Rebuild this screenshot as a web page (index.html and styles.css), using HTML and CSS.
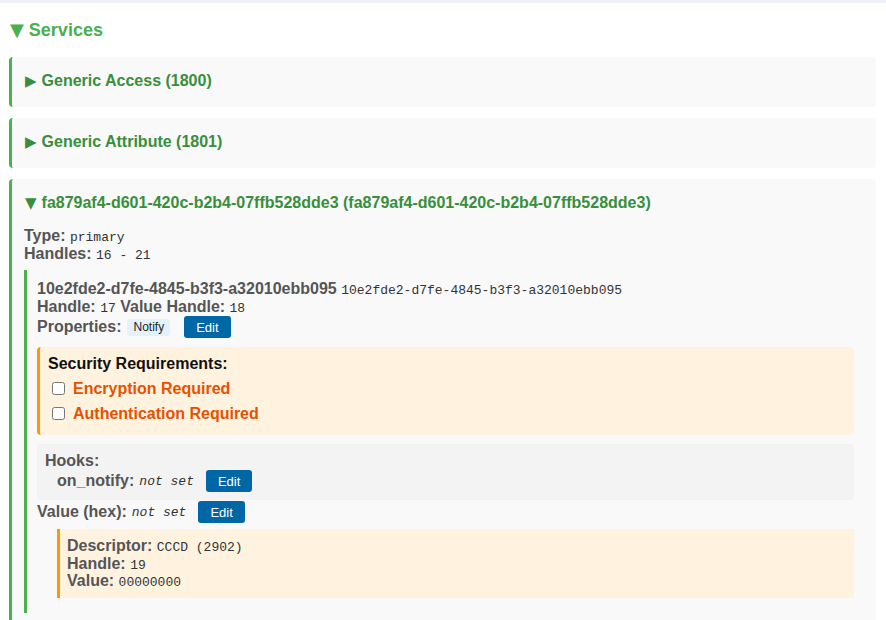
FILE: index.html
```html
<!DOCTYPE html>
<html lang="en">
<head>
  <meta charset="UTF-8" />
  <meta name="viewport" content="width=device-width, initial-scale=1" />
  <title>GATT Services</title>
  <link rel="stylesheet" href="styles.css">
</head>
<body>
  <div class="top-strip"></div>

  <div class="services">
    <h2 class="section-title"><span class="caret">▼</span> Services</h2>

    <div class="service">
      <div class="service-title"><span class="arrow">▶</span>Generic Access (1800)</div>
    </div>

    <div class="service">
      <div class="service-title"><span class="arrow">▶</span>Generic Attribute (1801)</div>
    </div>

    <div class="service open">
      <div class="service-title"><span class="arrow">▼</span>fa879af4-d601-420c-b2b4-07ffb528dde3 (fa879af4-d601-420c-b2b4-07ffb528dde3)</div>

      <div class="line"><b class="label">Type:</b> <code>primary</code></div>
      <div class="line"><b class="label">Handles:</b> <code>16 - 21</code></div>

      <div class="characteristic">
        <div class="line"><b class="label">10e2fde2-d7fe-4845-b3f3-a32010ebb095</b> <code>10e2fde2-d7fe-4845-b3f3-a32010ebb095</code></div>
        <div class="line"><b class="label">Handle:</b> <code>17</code> <b class="label">Value Handle:</b> <code>18</code></div>
        <div class="row">
          <b class="label">Properties:</b>
          <span class="badge">Notify</span>
          <button class="btn">Edit</button>
        </div>

        <div class="security">
          <div class="security-title">Security Requirements:</div>
          <label class="check"><input type="checkbox"> Encryption Required</label>
          <label class="check"><input type="checkbox"> Authentication Required</label>
        </div>

        <div class="hooks">
          <div class="line"><b class="label">Hooks:</b></div>
          <div class="row hook">
            <b class="label">on_notify:</b>
            <code class="unset">not set</code>
            <button class="btn">Edit</button>
          </div>
        </div>

        <div class="row value-row">
          <b class="label">Value (hex):</b>
          <code class="unset">not set</code>
          <button class="btn">Edit</button>
        </div>

        <div class="descriptor">
          <div class="line"><b class="label">Descriptor:</b> <code>CCCD (2902)</code></div>
          <div class="line"><b class="label">Handle:</b> <code>19</code></div>
          <div class="line"><b class="label">Value:</b> <code>00000000</code></div>
        </div>
      </div>

      <div class="spacer"></div>
    </div>
  </div>
</body>
</html>
```

FILE: styles.css
```css
body {
  margin: 0;
  font-family: "Liberation Sans", Arial, sans-serif;
  font-size: 16px;
  color: #333;
  background: #fff;
}

.top-strip {
  height: 3px;
  background: #eef2f6;
}

.services {
  padding: 0 10px 0 9px;
}

.section-title {
  margin: 16px 0 16px 1px;
  font-size: 18px;
  line-height: 22px;
  color: #4caf50;
}

.caret {
  font-family: "DejaVu Sans", sans-serif;
}

.service {
  background: #f9f9f9;
  border-left: 3px solid #4caf50;
  border-radius: 4px;
  padding: 14px 12px 16px 12px;
  margin-bottom: 11px;
}

.service-title {
  font-weight: bold;
  line-height: 20px;
  color: #388e3c;
}

.arrow {
  font-family: "DejaVu Sans", sans-serif;
  font-size: 15px;
  line-height: 14px;
  margin-left: 1px;
  margin-right: 5px;
}

.open .service-title {
  margin-bottom: 14px;
}

.line {
  line-height: 17.5px;
}

.characteristic > .line {
  line-height: 18px;
}

.label {
  color: #555;
}

code {
  font-family: "Liberation Mono", "Courier New", monospace;
  font-size: 13px;
  line-height: 13px;
  color: #333;
}

.unset {
  font-style: italic;
  margin-left: 5px;
}

.characteristic {
  margin-top: 8px;
  border-left: 3px solid #4caf50;
  padding: 10px 10px 15px 10px;
}

.row {
  display: flex;
  align-items: center;
  height: 22px;
}

.characteristic > .row:first-of-type {
  margin-top: 1px;
}

.badge {
  margin-left: 6px;
  padding: 0 6px;
  height: 17px;
  line-height: 17px;
  font-size: 12px;
  color: #222;
  background: #e3f2fd;
  border-radius: 3px;
}

.btn {
  margin-left: 14px;
  height: 22px;
  padding: 0 12px;
  border: none;
  border-radius: 3px;
  background: #0067a6;
  color: #fff;
  font-family: "Liberation Sans", Arial, sans-serif;
  font-size: 13px;
  cursor: pointer;
}

.btn:hover {
  background: #005486;
}

.security {
  margin-top: 9px;
  padding: 8px 8px 9px 8px;
  background: #fff3e0;
  border-left: 3px solid #ff9800;
  border-radius: 4px;
}

.security-title {
  font-weight: bold;
  line-height: 18px;
  color: #111;
  margin-bottom: 3px;
}

.check {
  display: flex;
  align-items: center;
  height: 25px;
  font-weight: bold;
  color: #e65100;
}

.check input {
  margin: 0 8px 0 4px;
  width: 13px;
  height: 13px;
}

.hooks {
  margin-top: 9px;
  padding: 8px 8px 8px 8px;
  background: #f3f3f3;
  border-radius: 4px;
}

.hooks .line {
  line-height: 18px;
}

.hook {
  padding-left: 12px;
}

.hook .btn,
.value-row .btn {
  margin-left: 12px;
}

.value-row {
  margin-top: 1px;
}

.descriptor {
  margin: 6px 0 0 20px;
  padding: 8px 7px;
  background: #fff3e0;
  border-left: 3px solid #ff9800;
}

.spacer {
  height: 40px;
}
```
